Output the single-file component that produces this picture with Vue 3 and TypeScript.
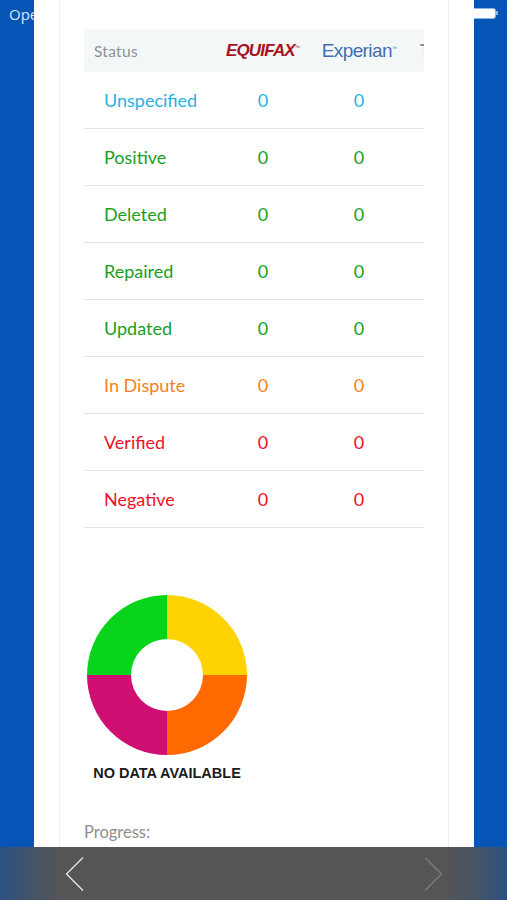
<script setup lang="ts">
interface Row { label: string; tone: string; equifax: number; experian: number }
const rows: Row[] = [
  { label: 'Unspecified', tone: 'blue', equifax: 0, experian: 0 },
  { label: 'Positive', tone: 'green', equifax: 0, experian: 0 },
  { label: 'Deleted', tone: 'green', equifax: 0, experian: 0 },
  { label: 'Repaired', tone: 'green', equifax: 0, experian: 0 },
  { label: 'Updated', tone: 'green', equifax: 0, experian: 0 },
  { label: 'In Dispute', tone: 'orange', equifax: 0, experian: 0 },
  { label: 'Verified', tone: 'red', equifax: 0, experian: 0 },
  { label: 'Negative', tone: 'red', equifax: 0, experian: 0 },
]
</script>

<template>
  <div class="page">
    <div class="status-carrier">Open</div>
    <div class="battery"><span class="battery-fill"></span><span class="battery-tip"></span></div>
    <main class="viewport">
      <section class="sheet">
        <div class="card">
          <div class="table">
            <div class="head row-grid">
              <span class="head-status">Status</span>
              <span class="equifax">EQUIFAX<sup>™</sup></span>
              <span class="experian">Experian<sup>™</sup></span>
              <span class="transunion">TransUnion</span>
            </div>
            <div v-for="row in rows" :key="row.label" class="row row-grid" :class="row.tone">
              <span class="row-label">{{ row.label }}</span>
              <span class="num">{{ row.equifax }}</span>
              <span class="num">{{ row.experian }}</span>
            </div>
          </div>
          <div class="chart">
            <svg class="donut" width="160" height="160" viewBox="0 0 160 160">
              <path d="M80 0A80 80 0 0 0 0 80H44A36 36 0 0 1 80 44Z" fill="#09d41c" />
              <path d="M80 0A80 80 0 0 1 160 80H116A36 36 0 0 0 80 44Z" fill="#ffd302" />
              <path d="M160 80A80 80 0 0 1 80 160V116A36 36 0 0 0 116 80Z" fill="#ff6a00" />
              <path d="M80 160A80 80 0 0 1 0 80H44A36 36 0 0 0 80 116Z" fill="#cf0f72" />
            </svg>
            <div class="no-data">NO DATA AVAILABLE</div>
          </div>
          <div class="progress">Progress:</div>
        </div>
      </section>
    </main>
    <nav class="toolbar">
      <svg class="chev" width="20" height="36" viewBox="0 0 20 36">
        <path d="M18 1.5 1.5 18 18 34.500" fill="none" stroke="#e4e4e4" stroke-width="1.400" />
      </svg>
      <svg class="chev" width="20" height="36" viewBox="0 0 20 36">
        <path d="M2 1.500 18.500 18 2 34.500" fill="none" stroke="#7d7d7d" stroke-width="1.400" />
      </svg>
    </nav>
  </div>
</template>

<style>
html, body { margin: 0; padding: 0; }
</style>

<style scoped>
.page {
  position: relative;
  width: 507px;
  height: 900px;
  overflow: hidden;
  display: flex;
  flex-direction: column;
  background: #0654b5;
  font-family: Lato, "Noto Sans", sans-serif;
}
.status-carrier {
  position: absolute;
  left: 9px;
  top: 5px;
  font-size: 15px;
  line-height: 18px;
  color: #dbe7f6;
  font-family: "Open Sans", sans-serif;
}
.battery {
  position: absolute;
  left: 460px;
  top: 7px;
  width: 38px;
  height: 12px;
  display: flex;
  align-items: center;
  justify-content: flex-end;
}
.battery-fill {
  width: 24px;
  height: 9px;
  background: #fff;
  border-radius: 2px;
  box-shadow: 0 0 0 1px #8fb3e0;
}
.battery-tip {
  width: 2px;
  height: 4px;
  margin-left: 1px;
  background: #8fb3e0;
}
.viewport {
  position: relative;
  flex: 1;
  min-height: 0;
  padding: 0 33px 0 34px;
  overflow: hidden;
}
.sheet {
  height: 100%;
  background: #fff;
  padding: 0 25px;
}
.card {
  height: 100%;
  box-sizing: border-box;
  border-left: 1px solid #eef0f2;
  border-right: 1px solid #eef0f2;
  padding: 29px 25px 0 24px;
}
.table {
  width: 340px;
  overflow: hidden;
}
.row-grid {
  display: grid;
  grid-template-columns: 131px 96px 96px 96px;
  align-items: center;
}
.head {
  height: 43px;
  background: #f4f7f8;
  border-radius: 3px 0 0 3px;
  color: #8d9194;
  font-size: 15.500px;
  letter-spacing: 0.300px;
}
.head-status { padding-left: 10px; }
.equifax {
  justify-self: center;
  font-family: "Liberation Sans", sans-serif;
  font-weight: 700;
  font-style: italic;
  font-size: 17px;
  letter-spacing: -0.800px;
  color: #a8121f;
  white-space: nowrap;
  margin-left: -1px;
}
.equifax sup, .experian sup {
  font-size: 5px;
  font-weight: 400;
  vertical-align: 7px;
  line-height: 0;
}
.experian {
  justify-self: center;
  font-family: "Liberation Sans", sans-serif;
  font-size: 19px;
  letter-spacing: -0.600px;
  color: #3f6fb0;
  white-space: nowrap;
}
.transunion {
  font-family: Lato, sans-serif;
  font-weight: 700;
  font-size: 18px;
  color: #8d8d8d;
  padding-left: 13px;
  white-space: nowrap;
}
.row {
  height: 56px;
  border-bottom: 1px solid #e3e3e3;
  font-size: 18px;
}
.row-label { padding-left: 20px; }
.num { text-align: center; }
.blue { color: #29b2e2; }
.green { color: #179f1f; }
.orange { color: #f58220; }
.red { color: #ee1127; }
.chart {
  width: 166px;
  margin-top: 67px;
  display: flex;
  flex-direction: column;
  align-items: center;
}
.donut {
  display: block;
}
.no-data {
  margin-top: 9px;
  font-family: "Liberation Sans", sans-serif;
  font-weight: 700;
  font-size: 14.500px;
  line-height: 18px;
  color: #1c1c1c;
  white-space: nowrap;
}
.progress {
  margin-top: 40px;
  color: #8e8e8e;
  font-size: 16.500px;
  line-height: 20px;
}
.toolbar {
  flex: 0 0 53px;
  display: flex;
  align-items: center;
  justify-content: space-between;
  padding: 0 64px 0 65px;
  background: linear-gradient(90deg, #2d5181 0, #4a5563 40px, #555 62px, #555 445px, #4a5563 470px, #2d5181 507px);
}
.chev { display: block; }
</style>
